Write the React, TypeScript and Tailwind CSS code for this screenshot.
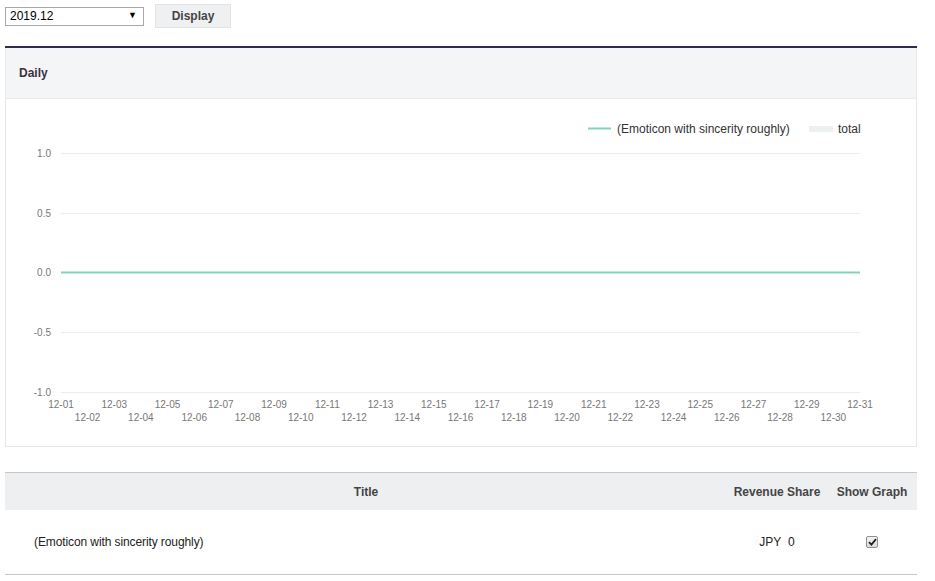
import React from "react";

const font = { fontFamily: '"Liberation Sans", Arial, sans-serif' };

function Chart() {
  const x0 = 55;
  const x1 = 854;
  const step = (x1 - x0) / 30;
  const ys = [
    { v: "1.0", y: 54 },
    { v: "0.5", y: 114 },
    { v: "0.0", y: 173 },
    { v: "-0.5", y: 233 },
    { v: "-1.0", y: 293 },
  ];
  const days = Array.from({ length: 31 }, (_, i) => i + 1);
  return (
    <svg width="910" height="347" className="block" style={font}>
      {ys.map((t) => (
        <g key={t.v}>
          <line x1={x0} x2={x1} y1={t.y + 0.5} y2={t.y + 0.5} stroke="#ececec" strokeWidth="1" />
          <text x={45} y={t.y + 3.5} textAnchor="end" fontSize="10" fill="#777">
            {t.v}
          </text>
        </g>
      ))}
      <line x1={x0} x2={x1} y1={173.5} y2={173.5} stroke="#86d3b3" strokeWidth="2" />
      {days.map((d) => {
        const x = x0 + (d - 1) * step;
        const odd = d % 2 === 1;
        return (
          <text key={d} x={x} y={odd ? 309 : 322} textAnchor="middle" fontSize="10" fill="#777">
            {`12-${String(d).padStart(2, "0")}`}
          </text>
        );
      })}
      <line x1={582} x2={605} y1={29.5} y2={29.5} stroke="#7fd6b2" strokeWidth="2" />
      <text x={611} y={34} fontSize="12" fill="#333">
        (Emoticon with sincerity roughly)
      </text>
      <rect x={803} y={27} width={24} height={6} fill="#edf1ed" />
      <text x={832} y={34} fontSize="12" fill="#333">
        total
      </text>
    </svg>
  );
}

export default function App() {
  return (
    <div className="w-[935px] h-[581px] bg-white overflow-hidden" style={font}>
      <div className="flex items-center gap-[11px] pl-[5px] pt-[4px]">
        <div className="w-[139px] h-[19px] border border-[#a9a9a9] bg-white flex items-center justify-between pl-[4px] pr-[6px] text-[12px] text-black">
          <span>2019.12</span>
          <span className="text-[9px]">▼</span>
        </div>
        <div className="w-[76px] h-[24px] bg-[#eff0f2] border border-[#e2e3e6] flex items-center justify-center text-[12px] font-bold text-[#444]">
          Display
        </div>
      </div>

      <div className="ml-[5px] mt-[18px] w-[912px] border-t-2 border-[#2b2e45]">
        <div className="h-[51px] bg-[#f4f5f7] border-x border-b border-[#ebebeb] flex items-center pl-[13px] text-[12px] font-bold text-[#3b3040]">
          Daily
        </div>
        <div className="h-[348px] border-x border-b border-[#e6e6e6] bg-white">
          <Chart />
        </div>
      </div>

      <div className="ml-[5px] mt-[25px] w-[912px] border-t border-[#c8c8c8]">
        <div className="h-[37px] bg-[#eeeff1] flex items-center text-[12px] font-bold text-[#444]">
          <div className="w-[722px] text-center">Title</div>
          <div className="w-[100px] text-center">Revenue Share</div>
          <div className="flex-1 text-center">Show Graph</div>
        </div>
        <div className="h-[65px] border-b border-[#c8c8c8] flex items-center text-[12px] text-[#222]">
          <div className="w-[722px] pl-[29px] tracking-[-0.1px]">(Emoticon with sincerity roughly)</div>
          <div className="w-[100px] text-center">JPY&nbsp;&nbsp;0</div>
          <div className="flex-1 flex justify-center">
            <div className="w-[12px] h-[12px] border border-[#8f8f8f] rounded-[2px] bg-gradient-to-b from-[#f4f4f4] to-[#dcdcdc] flex items-center justify-center">
              <svg width="9" height="8" viewBox="0 0 9 8">
                <path d="M1 4.2 L3.4 6.6 L8 1.2" fill="none" stroke="#222" strokeWidth="1.8" />
              </svg>
            </div>
          </div>
        </div>
      </div>
    </div>
  );
}
